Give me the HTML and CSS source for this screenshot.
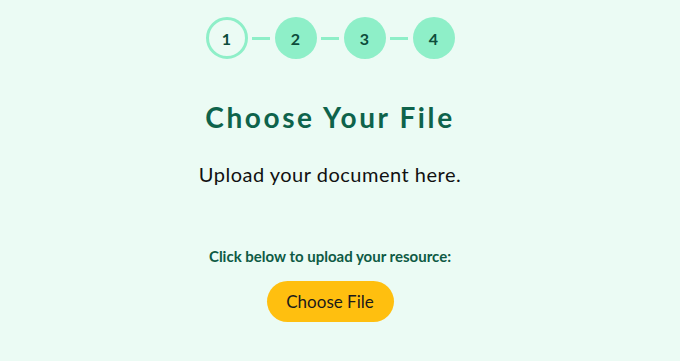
FILE: index.html
```html
<!DOCTYPE html>
<html lang="en">
<head>
<meta charset="utf-8">
<title>Choose Your File</title>
<link rel="stylesheet" href="styles.css">
</head>
<body>
<main class="page">
  <div class="steps">
    <div class="step step-current">1</div>
    <div class="connector"></div>
    <div class="step">2</div>
    <div class="connector"></div>
    <div class="step">3</div>
    <div class="connector"></div>
    <div class="step">4</div>
  </div>
  <h1 class="title">Choose Your File</h1>
  <p class="subtitle">Upload your document here.</p>
  <p class="prompt">Click below to upload your resource:</p>
  <button class="choose-btn" type="button">Choose File</button>
</main>
</body>
</html>
```
FILE: styles.css
```css
html, body {
  margin: 0;
  padding: 0;
  background: #ebfbf4;
}
body {
  font-family: "Lato", "Open Sans", sans-serif;
  width: 680px;
  height: 361px;
  overflow: hidden;
}
.page {
  width: 660px;
  display: flex;
  flex-direction: column;
  align-items: center;
  padding-top: 17px;
}
.steps {
  display: flex;
  align-items: center;
}
.step {
  box-sizing: border-box;
  width: 42px;
  height: 42px;
  border-radius: 50%;
  background: #8eefc8;
  color: #0d4d3b;
  font-weight: 700;
  font-size: 16px;
  display: flex;
  align-items: center;
  justify-content: center;
}
.step-current {
  background: transparent;
  border: 3px solid #8eefc8;
}
.connector {
  width: 18px;
  height: 3px;
  margin: 0 4.5px;
  background: #8eefc8;
}
.title {
  margin: 42px 0 0;
  font-size: 28px;
  line-height: 32px;
  font-weight: 700;
  letter-spacing: 2.6px;
  color: #0e634b;
}
.subtitle {
  margin: 29px 0 0;
  font-size: 20px;
  line-height: 24px;
  letter-spacing: 0.5px;
  color: #111;
}
.prompt {
  margin: 61px 0 0;
  font-size: 15px;
  line-height: 18px;
  font-weight: 700;
  color: #0e5a44;
}
.choose-btn {
  margin-top: 16px;
  width: 127px;
  height: 41px;
  border: none;
  border-radius: 21px;
  background: #ffbf0f;
  color: #1a1a1a;
  font-family: inherit;
  font-size: 17px;
}
```
